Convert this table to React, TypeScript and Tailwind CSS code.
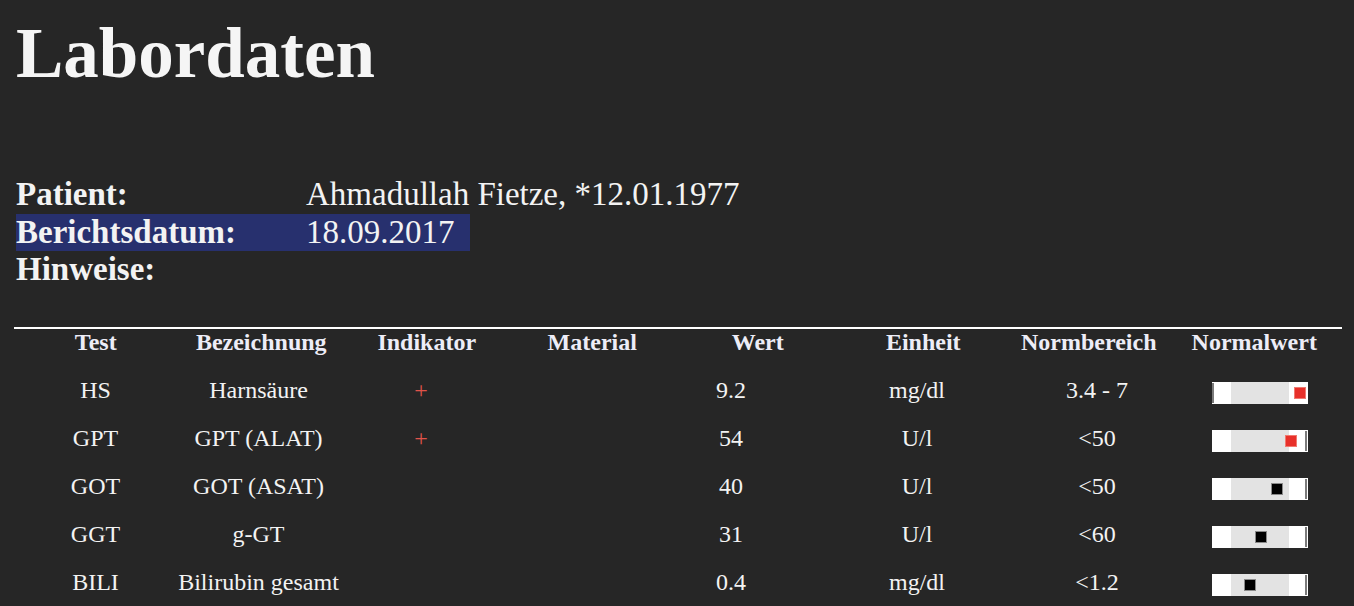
const rows = [
  { test: "HS", name: "Harnsäure", ind: "+", wert: "9.2", unit: "mg/dl", norm: "3.4 - 7", pos: 82, red: true, edge: "left" },
  { test: "GPT", name: "GPT (ALAT)", ind: "+", wert: "54", unit: "U/l", norm: "<50", pos: 73, red: true, edge: "right" },
  { test: "GOT", name: "GOT (ASAT)", ind: "", wert: "40", unit: "U/l", norm: "<50", pos: 59, red: false, edge: "right" },
  { test: "GGT", name: "g-GT", ind: "", wert: "31", unit: "U/l", norm: "<60", pos: 43, red: false, edge: "right" },
  { test: "BILI", name: "Bilirubin gesamt", ind: "", wert: "0.4", unit: "mg/dl", norm: "<1.2", pos: 32, red: false, edge: "right" },
];

const headers = ["Test", "Bezeichnung", "Indikator", "Material", "Wert", "Einheit", "Normbereich", "Normalwert"];

function RangeBar({ pos, red, edge }: { pos: number; red: boolean; edge: string }) {
  return (
    <div className="relative w-[96px] h-[22px] bg-white">
      <div className="absolute left-[19px] top-0 w-[58px] h-full bg-[#e3e3e3]" />
      {edge === "left" ? (
        <div className="absolute left-0 top-px w-[2px] h-[20px] bg-[#7a7a7a]" />
      ) : (
        <div className="absolute right-px top-px w-[2px] h-[20px] bg-[#7a7a7a]" />
      )}
      <div
        className={
          red
            ? "absolute top-[5px] w-[12px] h-[12px] bg-[#e8302a] border border-[#f07a70]"
            : "absolute top-[5px] w-[12px] h-[12px] bg-black border border-[#8a8a8a]"
        }
        style={{ left: pos }}
      />
    </div>
  );
}

export default function App() {
  return (
    <div className="min-h-screen bg-[#262626] text-[#f3f3f3] font-['Liberation_Serif',serif] overflow-hidden">
      <h1 className="pl-4 pt-[13px] text-[71px] leading-[80px] font-bold text-[#f5f5f5]">Labordaten</h1>

      <div className="mt-[83px] pl-4 text-[33px] leading-[37.5px]">
        <div className="flex">
          <div className="w-[290px] font-bold">Patient:</div>
          <div>Ahmadullah Fietze, *12.01.1977</div>
        </div>
        <div className="flex w-[454px] bg-[#27306e]">
          <div className="w-[290px] font-bold">Berichtsdatum:</div>
          <div>18.09.2017</div>
        </div>
        <div className="flex">
          <div className="w-[290px] font-bold">Hinweise:</div>
        </div>
      </div>

      <div className="mt-[38px] ml-[14px] w-[1328px] border-t-2 border-white" />

      <div className="ml-[13px] w-[1324px] grid grid-cols-8 text-center text-[24px] leading-[26px] font-bold text-[#ededf7]">
        {headers.map((h) => (
          <div key={h}>{h}</div>
        ))}
      </div>

      <div className="mt-[11px] ml-[14px] text-[24px]">
        {rows.map((r) => (
          <div
            key={r.test}
            className="grid grid-cols-[163px_163px_162px_151px_156px_216px_144px_182px] h-[48px] leading-[48px] text-center"
          >
            <div>{r.test}</div>
            <div>{r.name}</div>
            <div className="text-[#e0544a]">{r.ind}</div>
            <div></div>
            <div>{r.wert}</div>
            <div>{r.unit}</div>
            <div>{r.norm}</div>
            <div className="flex justify-center items-start pt-4">
              <RangeBar pos={r.pos} red={r.red} edge={r.edge} />
            </div>
          </div>
        ))}
      </div>
    </div>
  );
}
